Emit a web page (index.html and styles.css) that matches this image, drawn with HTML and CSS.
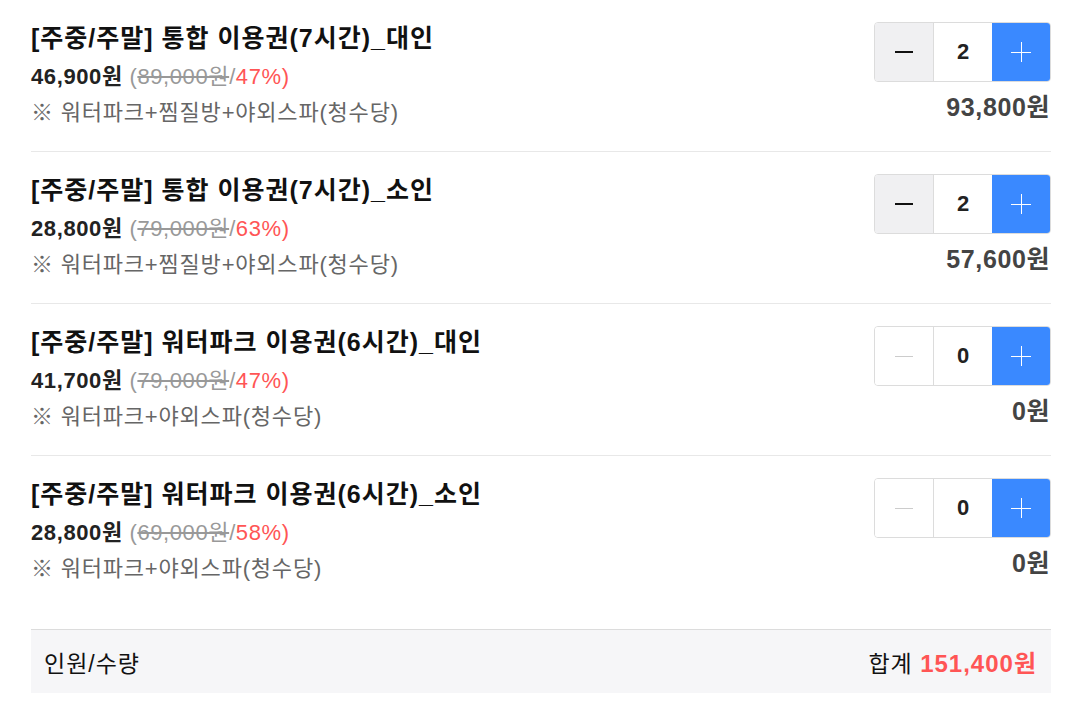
FILE: index.html
```html
<!DOCTYPE html>
<html lang="ko">
<head>
<meta charset="utf-8">
<link rel="stylesheet" href="styles.css">
</head>
<body>
<div class="wrap">
  <div class="item">
    <div class="info">
      <div class="title">[주중/주말] 통합 이용권(7시간)_대인</div>
      <div class="price"><b>46,900원</b> <span class="orig">(<s>89,000원</s>/</span><span class="pct">47%)</span></div>
      <div class="note">※ 워터파크+찜질방+야외스파(청수당)</div>
    </div>
    <div class="side">
      <div class="stepper">
        <button class="btn minus"><span class="dash thin"></span></button>
        <div class="count">2</div>
        <button class="btn plus"><span class="cross"></span></button>
      </div>
      <div class="sub">93,800원</div>
    </div>
  </div>
  <div class="item">
    <div class="info">
      <div class="title">[주중/주말] 통합 이용권(7시간)_소인</div>
      <div class="price"><b>28,800원</b> <span class="orig">(<s>79,000원</s>/</span><span class="pct">63%)</span></div>
      <div class="note">※ 워터파크+찜질방+야외스파(청수당)</div>
    </div>
    <div class="side">
      <div class="stepper">
        <button class="btn minus"><span class="dash"></span></button>
        <div class="count">2</div>
        <button class="btn plus"><span class="cross"></span></button>
      </div>
      <div class="sub">57,600원</div>
    </div>
  </div>
  <div class="item">
    <div class="info">
      <div class="title">[주중/주말] 워터파크 이용권(6시간)_대인</div>
      <div class="price"><b>41,700원</b> <span class="orig">(<s>79,000원</s>/</span><span class="pct">47%)</span></div>
      <div class="note">※ 워터파크+야외스파(청수당)</div>
    </div>
    <div class="side">
      <div class="stepper">
        <button class="btn minus off"><span class="dash thin"></span></button>
        <div class="count">0</div>
        <button class="btn plus"><span class="cross"></span></button>
      </div>
      <div class="sub">0원</div>
    </div>
  </div>
  <div class="item last">
    <div class="info">
      <div class="title">[주중/주말] 워터파크 이용권(6시간)_소인</div>
      <div class="price"><b>28,800원</b> <span class="orig">(<s>69,000원</s>/</span><span class="pct">58%)</span></div>
      <div class="note">※ 워터파크+야외스파(청수당)</div>
    </div>
    <div class="side">
      <div class="stepper">
        <button class="btn minus off"><span class="dash thin"></span></button>
        <div class="count">0</div>
        <button class="btn plus"><span class="cross"></span></button>
      </div>
      <div class="sub">0원</div>
    </div>
  </div>
  <div class="total">
    <span class="label">인원/수량</span>
    <span class="sum">합계 <b>151,400원</b></span>
  </div>
</div>
</body>
</html>
```

FILE: styles.css
```css
* { box-sizing: border-box; }
html, body { margin: 0; padding: 0; background: #fff; }
body {
  font-family: "Liberation Sans", Arial, "Noto Sans CJK KR", sans-serif;
  color: #111;
}
.wrap {
  width: 1020px;
  margin-left: 31px;
}
.item {
  display: flex;
  justify-content: space-between;
  padding: 20px 0 20px;
  border-bottom: 1px solid #e8e8e8;
}
.item.last { border-bottom: none; }
.info { display: flex; flex-direction: column; }
.title {
  font-size: 25px;
  letter-spacing: 1px;
  font-weight: bold;
  line-height: 36px;
  margin-bottom: 3px;
  color: #111;
  white-space: nowrap;
}
.price {
  font-size: 22px;
  letter-spacing: 0.6px;
  line-height: 36px;
  color: #222;
  white-space: nowrap;
}
.price b { font-weight: bold; color: #222; }
.orig { color: #999; }
.orig s { text-decoration: line-through; }
.pct { color: #ff5555; }
.note {
  font-size: 22px;
  letter-spacing: 0.8px;
  line-height: 36px;
  color: #666;
  white-space: nowrap;
}
.side {
  display: flex;
  flex-direction: column;
  align-items: flex-end;
  padding-top: 2px;
}
.stepper {
  display: flex;
  width: 177px;
  height: 60px;
  border: 1px solid #dcdcdc;
  border-radius: 4px;
  overflow: hidden;
}
.btn {
  border: none;
  padding: 0;
  margin: 0;
  width: 59px;
  height: 100%;
  display: flex;
  align-items: center;
  justify-content: center;
  position: relative;
}
.minus { background: #f0f0f2; border-right: 1px solid #dcdcdc; }
.minus.off { background: #fff; }
.dash { display: block; width: 18px; height: 2px; background: #111; }
.dash.thin { height: 1.4px; }
.minus.off .dash { background: #ccc; height: 1px; }
.plus { background: #3a89ff; flex: 1; }
.cross { display: block; width: 20px; height: 20px; position: relative; }
.cross::before, .cross::after {
  content: "";
  position: absolute;
  background: #fff;
}
.cross::before { left: 0; right: 0; top: 9.5px; height: 1.4px; }
.cross::after { top: 0; bottom: 0; left: 9.5px; width: 1.4px; }
.count {
  width: 58px;
  display: flex;
  align-items: center;
  justify-content: center;
  font-size: 22px;
  font-weight: bold;
  color: #222;
  background: #fff;
}
.sub {
  margin-top: 7px;
  font-size: 25px;
  letter-spacing: 0.6px;
  font-weight: bold;
  line-height: 36px;
  color: #444;
  padding-right: 1px;
  white-space: nowrap;
}
.total {
  margin-top: 22px;
  height: 64px;
  background: #f6f6f8;
  border-top: 1px solid #dcdcdc;
  display: flex;
  align-items: center;
  justify-content: space-between;
  padding: 0 14px 0 13px;
  font-size: 23px;
  letter-spacing: 1px;
  color: #111;
}
.sum b { color: #ff5555; font-weight: bold; font-size: 24px; }
```
